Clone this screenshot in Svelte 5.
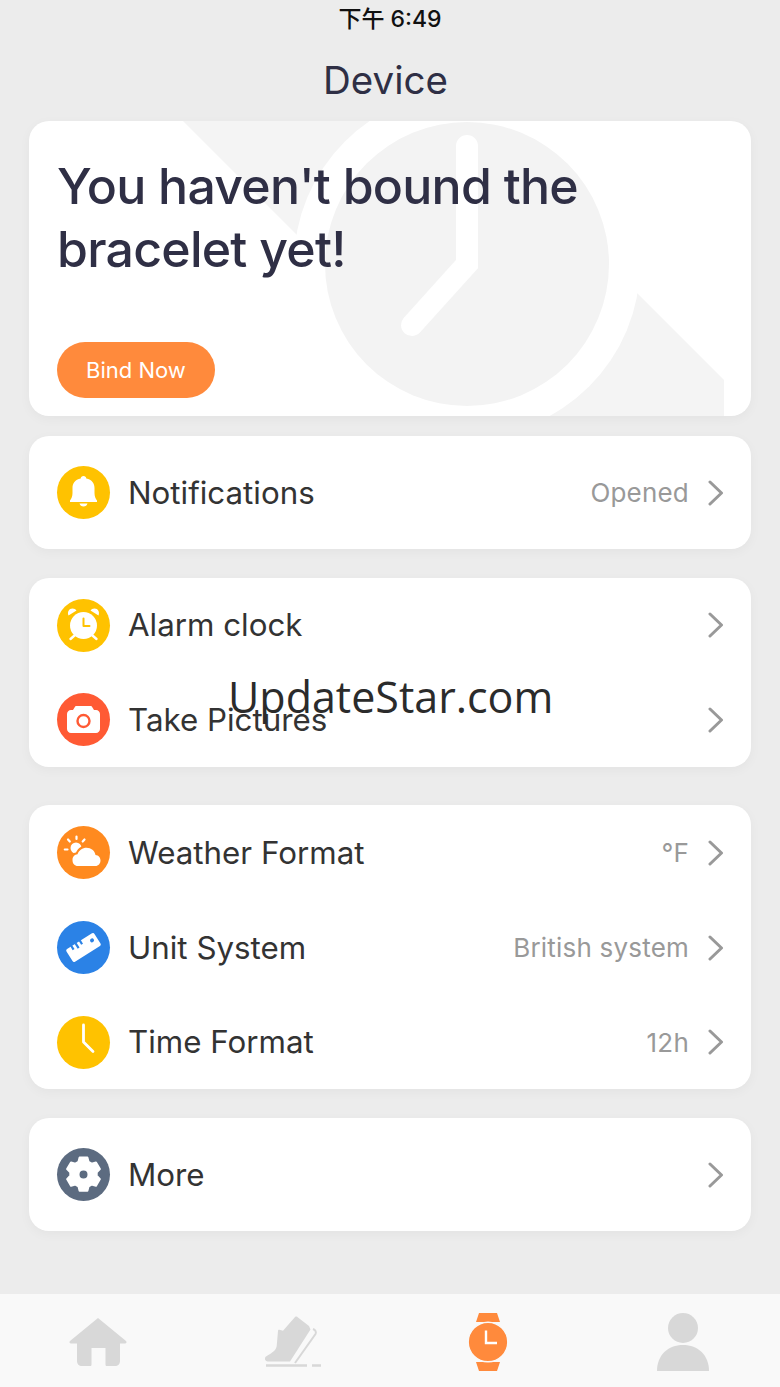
<script>
  const groups = [
    [{ icon: 'bell', label: 'Notifications', value: 'Opened' }],
    [
      { icon: 'alarm', label: 'Alarm clock' },
      { icon: 'camera', label: 'Take Pictures' }
    ],
    [
      { icon: 'weather', label: 'Weather Format', value: '°F' },
      { icon: 'ruler', label: 'Unit System', value: 'British system' },
      { icon: 'clock', label: 'Time Format', value: '12h' }
    ],
    [{ icon: 'gear', label: 'More' }]
  ];
</script>

<div class="page">
  <div class="status">下午 6:49</div>
  <h1 class="title">Device</h1>

  <section class="card hero">
    <svg class="hero-bg" viewBox="29 121 722 295" aria-hidden="true">
      <polygon points="183,121 420,121 637,293 724,380 724,416 500,416 297,235" fill="#f4f4f4" />
      <circle cx="467" cy="264" r="173" fill="#fff" />
      <circle cx="467" cy="264" r="142" fill="#f3f3f3" />
      <path d="M467 146V264L412 325" fill="none" stroke="#fff" stroke-width="22" stroke-linecap="round" stroke-linejoin="miter" />
    </svg>
    <h2>You haven't bound the<br />bracelet yet!</h2>
    <button class="bind">Bind Now</button>
  </section>

  {#each groups as rows, g}
    <section class="card list g{g}">
      {#each rows as row}
        <div class="row">
          <span class="badge {row.icon}">
            <svg viewBox="0 0 53 53" width="53" height="53">
              {#if row.icon === 'bell'}
                <path fill="#fff" d="M26.5 10c-1.600 0-2.700 1-2.800 2.500C18 13.700 15.500 17.500 15.500 22v5c0 3.500-1 5.500-2.500 7.500V36h27v-1.500c-1.500-2-2.500-4-2.500-7.500v-5c0-4.500-2.500-8.300-8.200-9.500-.1-1.500-1.200-2.500-2.800-2.500z" />
                <path fill="#fff" d="M22.500 37.500h8c-.5 2-2 3-4 3s-3.500-1-4-3z" />
              {:else if row.icon === 'alarm'}
                <circle cx="26.500" cy="26.500" r="13.500" fill="#fff" />
                <path d="M26.500 19.500v7.500h6" fill="none" stroke="#ffc200" stroke-width="2" stroke-linecap="round" stroke-linejoin="round" />
                <path fill="#fff" d="M11.500 16.500c-1.500-3.500.5-7 4-7 1.800 0 3.200.8 4 2zM41.500 16.500c1.500-3.500-.5-7-4-7-1.800 0-3.200.8-4 2z" />
                <path d="M17.500 36.500l-4 3.500M35.500 36.500l4 3.500" stroke="#fff" stroke-width="2.400" stroke-linecap="round" />
              {:else if row.icon === 'camera'}
                <path fill="#fff" d="M19.500 13c-.8 0-1.500.5-1.800 1.200L16 17h-2c-2.200 0-4 1.800-4 4v15c0 2.200 1.800 4 4 4h25c2.200 0 4-1.800 4-4V21c0-2.200-1.800-4-4-4h-2l-1.700-2.800c-.3-.7-1-1.200-1.800-1.200z" />
                <circle cx="26.500" cy="28" r="6" fill="none" stroke="#ff5a34" stroke-width="2.400" />
              {:else if row.icon === 'weather'}
                <circle cx="19" cy="22" r="5.500" fill="#fff" />
                <path d="M19.500 10.500v2.500M11 13.500l1.800 2M7.800 23.500h2.700M27.500 13.500l-1.800 2" stroke="#fff" stroke-width="2.200" stroke-linecap="round" />
                <path fill="#ff8a1f" d="M21 42c-6 0-9-4-8.500-8.500.3-3.500 3-6.500 6.500-7 2-4.500 6-7 10.500-7 5 0 9 3 10 7.500 4 .5 6.500 3.500 6.500 7.500 0 4.500-3 7.500-7 7.500z" />
                <path fill="#fff" d="M21 40c-3.500 0-5.500-2.500-5.500-6s2.200-5.500 5-5.800c1.500-4 5-6.500 9-6.500 4.600 0 8.300 3 9 7.300 3 .2 5 2.500 5 5.500s-2.200 5.500-5 5.500z" />
              {:else if row.icon === 'ruler'}
                <g transform="rotate(-32 26.500 26.500)">
                  <rect x="10" y="19" width="33" height="15" rx="1.800" fill="#fff" />
                  <path d="M17 18.500v4.500M22 18.500v6M27 18.500v4.500" stroke="#2b82e6" stroke-width="2.200" />
                  <circle cx="37.500" cy="25" r="2" fill="#2b82e6" />
                </g>
              {:else if row.icon === 'clock'}
                <path d="M26.500 9V26L36 35.500" fill="none" stroke="#fff" stroke-width="2.800" stroke-linecap="round" stroke-linejoin="round" />
              {:else if row.icon === 'gear'}
                <path fill="#fff" fill-rule="evenodd" d="M22.600 9.500h7.800l1.200 4.400 3 1.700 4.400-1.200 3.900 6.700-3.200 3.300v3.400l3.200 3.300-3.900 6.700-4.400-1.200-3 1.700-1.200 4.400h-7.800l-1.200-4.400-3-1.700-4.400 1.200-3.900-6.700 3.200-3.300v-3.400l-3.200-3.300 3.900-6.700 4.400 1.200 3-1.700zM26.500 21.500a5 5 0 1 0 0 10 5 5 0 0 0 0-10z" stroke="#fff" stroke-width="2" stroke-linejoin="round" />
              {/if}
            </svg>
          </span>
          <span class="label">{row.label}</span>
          {#if row.value}<span class="value">{row.value}</span>{/if}
          <svg class="chevron" viewBox="0 0 16 26" width="16" height="26">
            <path d="M2 2l11.500 11L2 24" fill="none" stroke="#999" stroke-width="3" stroke-linecap="round" stroke-linejoin="round" />
          </svg>
        </div>
      {/each}
    </section>
  {/each}

  <nav class="tabs">
    <div class="tab">
      <svg viewBox="0 0 58 50" width="58" height="50">
        <path fill="#d8d8d8" d="M29 1 57 24c1 1 .5 2.500-1 2.500h-5V44c0 3-2 5-5 5h-8c-1 0-1.500-.5-1.500-1.500V31H22.500v16.500c0 1-.5 1.500-1.500 1.500h-8c-3 0-5-2-5-5V26.500H2c-1.500 0-2-1.500-1-2.500z" />
      </svg>
    </div>
    <div class="tab">
      <svg viewBox="0 0 56 52" width="56" height="52">
        <path fill="#d8d8d8" d="M30 1c1.200-.8 2.200-.5 3 .5L44 10l1.500 3.500L25 45.500H4c-3 0-4.500-1.500-4-3.500.5-1.500 1.500-2 2.500-2.500 5-3 8.500-5 9.200-9.500L13 15c0-1 .5-1.500 1.500-1.300l3.500 1z" />
        <path fill="none" stroke="#d8d8d8" stroke-width="2" d="M48 13c2.500 1 3.500 3 2.500 5L30 47" />
        <path d="M1 49.500h41M47 49.500h9" stroke="#d8d8d8" stroke-width="2.400" />
      </svg>
    </div>
    <div class="tab">
      <svg viewBox="0 0 40 58" width="40" height="58">
        <path fill="#ff8a3c" d="M11 0h18l3 9H8zM8 49h24l-3 9H11z" />
        <circle cx="20" cy="29" r="19.800" fill="#ff8a3c" stroke="#f9f9f9" stroke-width="1.400" />
        <path d="M18 17.500V30H29" fill="none" stroke="#fff" stroke-width="2.400" />
      </svg>
    </div>
    <div class="tab">
      <svg viewBox="0 0 52 58" width="52" height="58">
        <circle cx="26" cy="15" r="15" fill="#d8d8d8" />
        <path fill="#d8d8d8" d="M0 58c0-16 11-26 26-26s26 10 26 26z" />
      </svg>
    </div>
  </nav>

  <div class="mark">UpdateStar.com</div>
</div>

<style>
  :global(body) {
    margin: 0;
  }

  .page {
    position: relative;
    display: flex;
    flex-direction: column;
    width: 780px;
    height: 1387px;
    overflow: hidden;
    background: #ececec;
    font-family: Inter, "Noto Sans CJK SC", sans-serif;
  }

  .status {
    height: 39px;
    line-height: 39px;
    text-align: center;
    font-size: 23px;
    font-weight: 500;
    color: #111;
  }

  .title {
    margin: 0;
    height: 82px;
    padding-right: 9px;
    line-height: 82px;
    text-align: center;
    font-size: 38.5px;
    font-weight: 400;
    color: #2f2f45;
  }

  .card {
    margin: 0 29px;
    background: #fff;
    border-radius: 20px;
    box-shadow: 0 3px 12px rgba(0, 0, 0, 0.04);
  }

  .hero {
    position: relative;
    display: flex;
    flex-direction: column;
    align-items: flex-start;
    height: 295px;
    box-sizing: border-box;
    padding: 34px 28px 18px;
    overflow: hidden;
  }

  .hero-bg {
    position: absolute;
    left: 0;
    top: 0;
    width: 722px;
    height: 295px;
  }

  .hero h2 {
    position: relative;
    margin: 0;
    font-size: 50px;
    line-height: 63px;
    font-weight: 500;
    letter-spacing: -0.75px;
    color: #2f2f45;
  }

  .bind {
    position: relative;
    margin-top: auto;
    width: 158px;
    height: 56px;
    padding: 0;
    border: 0;
    border-radius: 28px;
    background: #ff8a3c;
    color: #fff;
    font: 400 22px Inter, sans-serif;
  }

  .list.g0 {
    margin-top: 20px;
    padding: 9px 0;
  }

  .list.g1 {
    margin-top: 29px;
  }

  .g1 .row {
    height: 94.5px;
  }

  .list.g2 {
    margin-top: 38px;
  }

  .list.g3 {
    margin-top: 29px;
    padding: 9px 0;
  }

  .row {
    display: flex;
    align-items: center;
    height: 95px;
    padding: 0 27px 0 28px;
  }

  .g2 .row:last-child {
    height: 94px;
  }

  .badge {
    display: block;
    width: 53px;
    height: 53px;
    margin-right: 19px;
    border-radius: 50%;
    background: #ffc200;
  }

  .badge svg {
    display: block;
  }

  .camera {
    background: #ff5a34;
  }

  .weather {
    background: #ff8a1f;
  }

  .ruler {
    background: #2b82e6;
  }

  .gear {
    background: #5c6b80;
  }

  .label {
    flex: 1;
    margin-left: -1px;
    font-size: 31.3px;
    color: #333;
  }

  .value {
    margin-right: 19px;
    font-size: 26px;
    letter-spacing: 0.2px;
    color: #999;
  }

  .tabs {
    display: flex;
    align-items: center;
    height: 93px;
    box-sizing: border-box;
    margin-top: auto;
    padding-top: 2px;
    background: #f9f9f9;
  }

  .tab {
    flex: 0 0 195px;
    display: flex;
    justify-content: center;
  }

  .tab svg {
    display: block;
  }

  .mark {
    position: absolute;
    left: 228px;
    top: 670px;
    font-family: "Open Sans", sans-serif;
    font-size: 43px;
    line-height: 54px;
    color: #2b2b2b;
    white-space: nowrap;
  }
</style>
